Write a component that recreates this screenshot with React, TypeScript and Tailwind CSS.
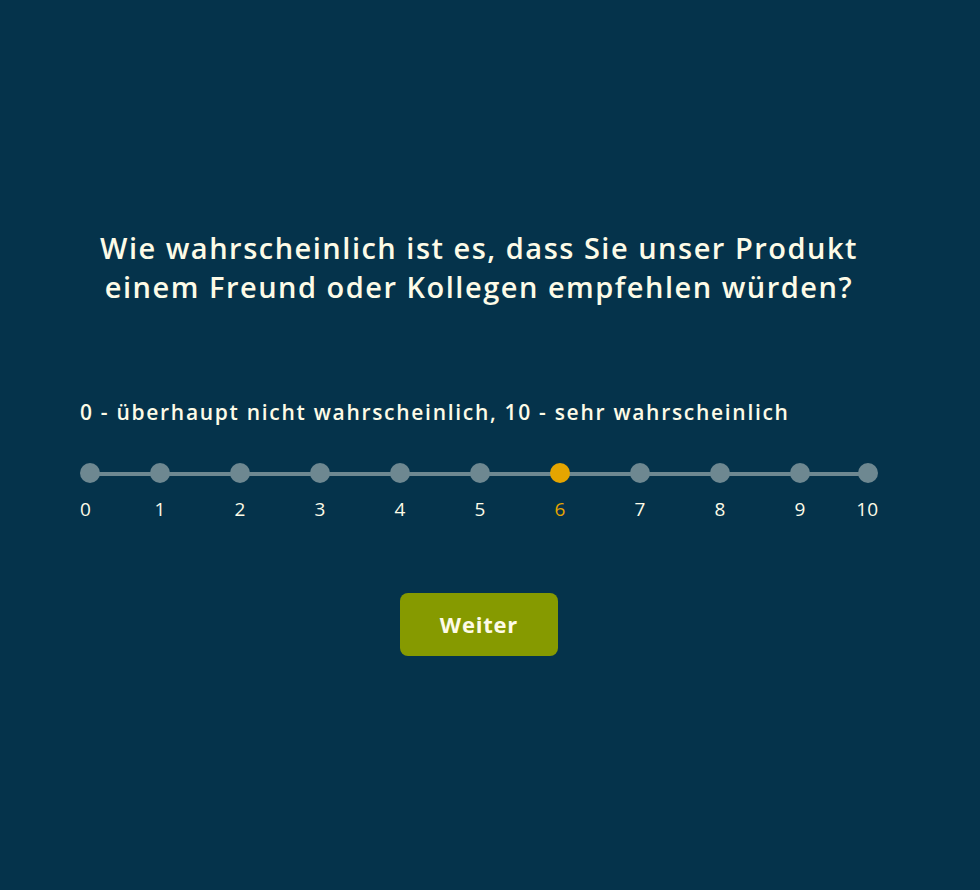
const scale = Array.from({ length: 11 }, (_, i) => i);

const App = () => {
  const selected = 6;

  return (
    <div
      className="min-h-[890px] w-full bg-[#05334b] text-[#fdfbe7]"
      style={{ fontFamily: '"Open Sans", "Noto Sans", sans-serif' }}
    >
      <div className="w-[798px] ml-[80px] pt-[228px]">
        <h1 className="text-center text-[29px] leading-[39px] font-semibold tracking-[1.5px]">
          Wie wahrscheinlich ist es, dass Sie unser Produkt
          <br />
          einem Freund oder Kollegen empfehlen würden?
        </h1>

        <p className="mt-[92px] text-[21px] leading-[28px] font-semibold tracking-[1.7px]">
          0 - überhaupt nicht wahrscheinlich, 10 - sehr wahrscheinlich
        </p>

        <div className="mt-[37px]">
          <div className="relative h-[20px]">
            <div className="absolute left-[10px] right-[10px] top-[9px] h-[4px] bg-[#6e8891]" />
            <div className="relative grid grid-cols-[40px_repeat(9,80px)_38px]">
              {scale.map((n) => (
                <div
                  key={n}
                  className={`flex ${n === 0 ? 'justify-start' : n === 10 ? 'justify-end' : 'justify-center'}`}
                >
                  <span
                    className={`w-[20px] h-[20px] rounded-full ${n === selected ? 'bg-[#e5a500]' : 'bg-[#6e8891]'}`}
                  />
                </div>
              ))}
            </div>
          </div>
          <div className="grid grid-cols-[40px_repeat(9,80px)_38px] mt-[14px] text-[19px] leading-[24px]">
            {scale.map((n) => (
              <span
                key={n}
                className={`${n === 0 ? 'text-left' : n === 10 ? 'text-right' : 'text-center'} ${n === selected ? 'text-[#e5a500]' : ''}`}
              >
                {n}
              </span>
            ))}
          </div>
        </div>

        <div className="flex justify-center mt-[72px]">
          <button className="w-[158px] h-[63px] rounded-[8px] bg-[#869a00] text-[22px] font-bold tracking-[0.8px] text-[#fdfbe7]">
            Weiter
          </button>
        </div>
      </div>
    </div>
  );
};

export default App;
